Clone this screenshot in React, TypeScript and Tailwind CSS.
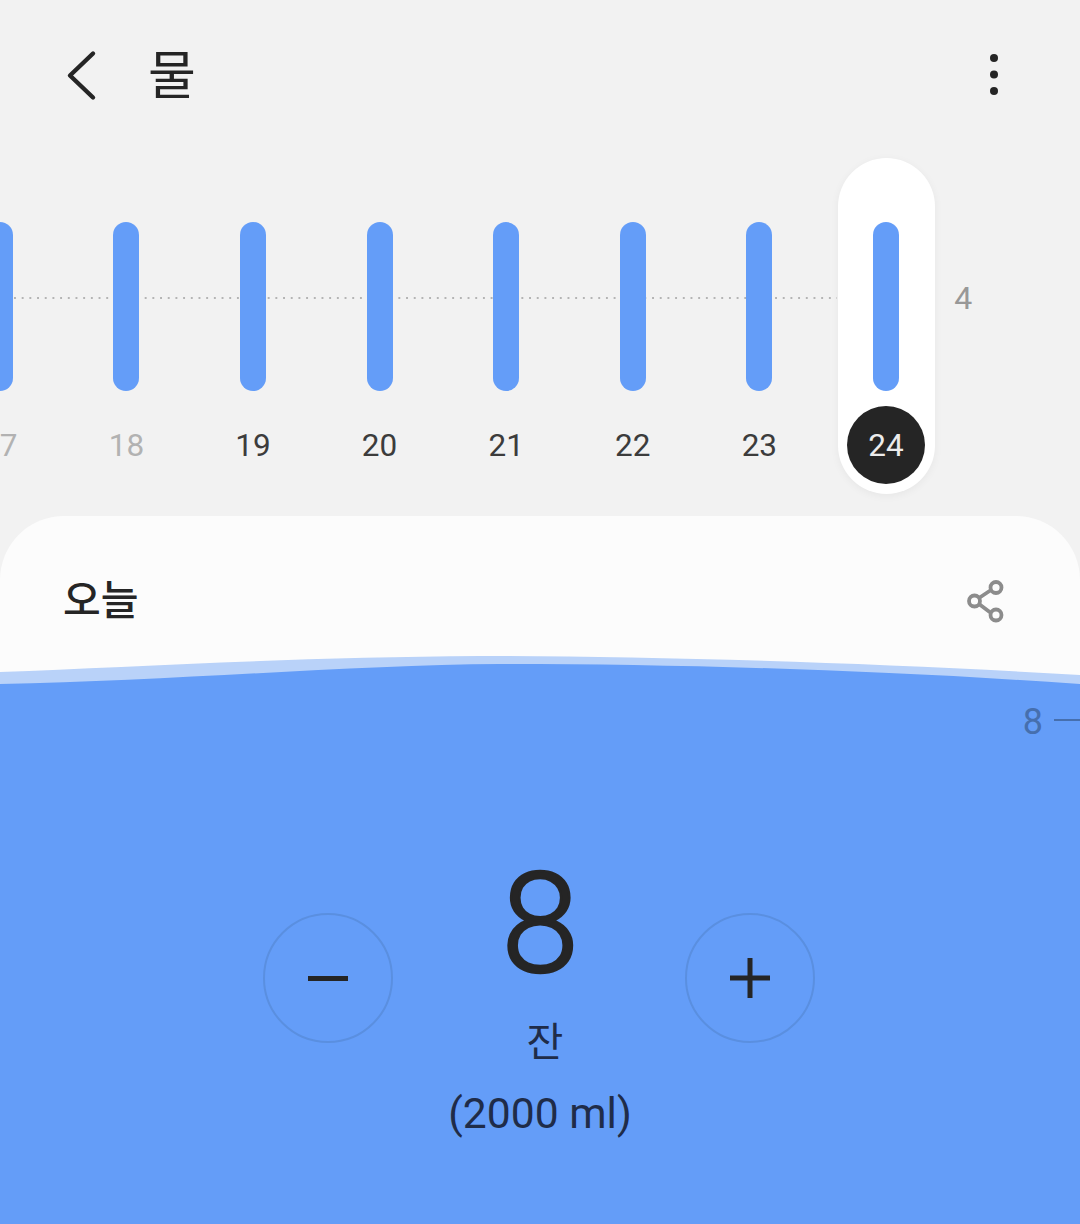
import React from 'react';

const days = [
  { label: '17', muted: true },
  { label: '18', muted: true },
  { label: '19' },
  { label: '20' },
  { label: '21' },
  { label: '22' },
  { label: '23' },
  { label: '24', selected: true },
];

const DayColumn: React.FC<{ label: string; muted?: boolean; selected?: boolean }> = ({ label, muted, selected }) => (
  <div className="relative flex h-[336px] w-[126.6px] shrink-0 flex-col items-center pt-[64px]">
    {selected && (
      <div className="absolute inset-y-0 left-[15px] w-[97px] rounded-full bg-white shadow-[0_2px_8px_rgba(0,0,0,0.05)]" />
    )}
    <div className="relative h-[169px] w-[26px] rounded-full bg-[#649df8]" />
    <div
      className={
        selected
          ? 'relative mt-[15px] flex h-[78px] w-[78px] items-center justify-center rounded-full bg-[#252525] pt-[1px] text-[31.5px] text-[#ececec]'
          : muted
            ? 'relative mt-[15px] flex h-[78px] w-[78px] items-center justify-center pt-[1px] text-[31.5px] text-[#b2b2b2]'
            : 'relative mt-[15px] flex h-[78px] w-[78px] items-center justify-center pt-[1px] text-[31.5px] text-[#3c3c3c]'
      }
    >
      {label}
    </div>
  </div>
);

const StepButton: React.FC<{ children: React.ReactNode }> = ({ children }) => (
  <div className="mt-[171px] flex h-[130px] w-[130px] shrink-0 items-center justify-center rounded-full border-2 border-[#5a8fe0]">
    {children}
  </div>
);

export default function App() {
  return (
    <div className="flex h-[1224px] w-[1080px] flex-col overflow-hidden bg-[#f2f2f2] font-['Roboto','Noto_Sans_CJK_KR',sans-serif] text-[#252525]">
      {/* header */}
      <div className="flex h-[158px] shrink-0 items-start justify-between pl-[66px] pr-[76px] pt-[48px]">
        <div className="flex items-center gap-[50px]">
          <svg width="32" height="54" viewBox="0 0 32 54" fill="none" className="mt-[-2px]">
            <path d="M27 4.5 L4 26.5 L27 48.5" stroke="#252525" strokeWidth="4.4" strokeLinecap="round" strokeLinejoin="round" />
          </svg>
          <span className="text-[52px] leading-[58px]">물</span>
        </div>
        <svg width="20" height="50" viewBox="0 0 20 50" className="mt-[1px]">
          <circle cx="10" cy="9" r="4" fill="#252525" />
          <circle cx="10" cy="25.5" r="4" fill="#252525" />
          <circle cx="10" cy="42" r="4" fill="#252525" />
        </svg>
      </div>

      {/* day chart */}
      <div className="relative ml-[-63.5px] flex h-[336px] shrink-0 items-start">
        <div className="absolute left-[77px] top-[139px] h-[2px] w-[823px] bg-[linear-gradient(to_right,#b4b4b4_2px,transparent_2px)] bg-[length:7.7px_2px]" />
        {days.map((d) => (
          <DayColumn key={d.label} {...d} />
        ))}
        <span className="ml-[5px] mt-[120px] text-[32px] leading-[40px] text-[#989898]">4</span>
      </div>

      {/* today card */}
      <div className="mt-[22px] flex flex-1 flex-col overflow-hidden rounded-t-[64px] bg-[#fcfcfc]">
        <div className="flex h-[139px] shrink-0 items-start justify-between pl-[63px] pr-[74px] pt-[61px]">
          <span className="text-[41px] font-medium leading-[48px]">오늘</span>
          <svg width="40" height="46" viewBox="0 0 40 46" fill="none" stroke="#8c8c8c" strokeWidth="3.8" className="mt-[1px]">
            <path d="M13 20 L25 12 M13 26 L25 35" />
            <circle cx="8.5" cy="23" r="5.5" />
            <circle cx="30" cy="9.5" r="5.5" />
            <circle cx="30" cy="37" r="5.5" />
          </svg>
        </div>

        <svg width="1080" height="31" viewBox="0 0 1080 31" className="block shrink-0">
          <path d="M0 17 C133 12 300 2 480 1 C650 1 880 8 1080 20 L1080 31 L0 31 Z" fill="#b9d2f9" />
          <path d="M0 29 C170 26 350 10 500 9 C680 9 880 15 1080 29 L1080 31 L0 31 Z" fill="#649df8" />
        </svg>

        <div className="flex-1 bg-[#649df8]">
          <div className="flex items-center justify-end gap-[11px] pt-[16px]">
            <span className="text-[36px] leading-[40px] text-[#466fae]">8</span>
            <div className="mt-[-4px] h-[2px] w-[26px] bg-[#466fae]" />
          </div>

          <div className="flex justify-center pr-[2px]">
            <StepButton>
              <div className="h-[5px] w-[40px] bg-[#252525]" />
            </StepButton>
            <div className="flex w-[292px] shrink-0 flex-col items-center">
              <span className="mt-[95px] pl-[2px] text-[140px] font-light leading-[174px] [-webkit-text-stroke:2.5px_#252525]">8</span>
              <span className="ml-[12px] mt-[7px] text-[40px] leading-[50px] text-[#1f2c49]">잔</span>
              <span className="ml-[2px] mt-[19px] text-[42.6px] leading-[52px] text-[#1f2c49]">(2000 ml)</span>
            </div>
            <StepButton>
              <svg width="40" height="40" viewBox="0 0 40 40">
                <path d="M0 20 H40 M20 0 V40" stroke="#252525" strokeWidth="5" />
              </svg>
            </StepButton>
          </div>
        </div>
      </div>
    </div>
  );
}
